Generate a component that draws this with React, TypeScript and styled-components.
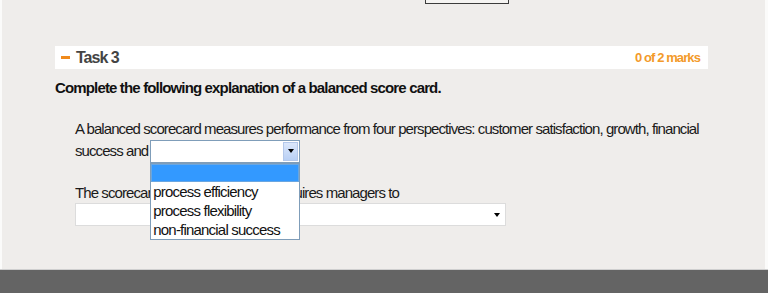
import React from 'react';
import styled, { createGlobalStyle } from 'styled-components';

const GlobalStyle = createGlobalStyle`
  html, body {
    margin: 0;
    padding: 0;
    background: #ffffff;
  }
`;

const Page = styled.div`
  width: 768px;
  height: 293px;
  display: flex;
  flex-direction: column;
  background: #fbfbfa;
  overflow: hidden;
  font-family: 'Liberation Sans', Arial, sans-serif;
`;

const Frame = styled.div`
  flex: 1;
  margin: 0 3px 0 2px;
  background: #efedeb;
  display: flex;
  flex-direction: column;
`;

const TopTab = styled.div`
  margin-left: 423px;
  width: 82px;
  height: 3px;
  border: 1px solid #3c3c3c;
  border-top: none;
  background: #f5f4f2;
`;

const Content = styled.div`
  padding: 42px 0 0 53px;
`;

const Header = styled.div`
  width: 653px;
  height: 23px;
  background: #ffffff;
  display: flex;
  align-items: center;
  justify-content: space-between;
  padding: 0 8px 0 6px;
  box-sizing: border-box;
`;

const HeaderTitle = styled.div`
  display: flex;
  align-items: center;
  gap: 6px;
  color: #444444;
  font-family: 'Liberation Sans Narrow', 'Liberation Sans', Arial, sans-serif;
  font-weight: bold;
  font-size: 16px;
  letter-spacing: -1px;
`;

const Dash = styled.span`
  width: 9px;
  height: 3px;
  background: #f08a1c;
`;

const Marks = styled.div`
  color: #f39a2a;
  font-family: 'Liberation Sans Narrow', 'Liberation Sans', Arial, sans-serif;
  font-weight: bold;
  font-size: 13px;
  letter-spacing: -0.9px;
`;

const Instruction = styled.p`
  margin: 10px 0 0 0;
  font-size: 15px;
  font-weight: bold;
  color: #111111;
  letter-spacing: -0.85px;
  line-height: 18px;
`;

const Question = styled.div`
  padding: 22px 0 0 20px;
  color: #1a1a1a;
  font-size: 15px;
  letter-spacing: -0.92px;
  line-height: 20px;
`;

const Line = styled.div`
  display: flex;
  align-items: center;
  gap: 2px;
  height: 20px;
`;

const Spacer = styled.div<{ $h: number }>`
  height: ${(p) => p.$h}px;
`;

const SelectBox = styled.div<{ $w: number; $plain?: boolean }>`
  position: relative;
  width: ${(p) => p.$w}px;
  height: 23px;
  box-sizing: border-box;
  background: #ffffff;
  border: 1px solid ${(p) => (p.$plain ? '#dcdcdc' : '#7f9db9')};
  display: flex;
  justify-content: flex-end;
  align-items: stretch;
`;

const ArrowButton = styled.div<{ $plain?: boolean }>`
  width: 15px;
  display: flex;
  align-items: center;
  justify-content: center;
  box-sizing: border-box;
  margin: 1px;
  ${(p) =>
    p.$plain
      ? 'background: transparent;'
      : `background: linear-gradient(#dbe7fb, #b9d0f5);
         border: 1px solid #b4c8ea;`}
`;

const Triangle = styled.span`
  width: 0;
  height: 0;
  border-left: 3px solid transparent;
  border-right: 3px solid transparent;
  border-top: 4px solid #000000;
`;

const OptionList = styled.div`
  position: absolute;
  left: -1px;
  top: 22px;
  width: 150px;
  box-sizing: border-box;
  background: #ffffff;
  border: 1px solid #7f9db9;
  z-index: 2;
  font-size: 15px;
  letter-spacing: -0.8px;
  color: #111111;
`;

const Option = styled.div<{ $active?: boolean }>`
  height: ${(p) => (p.$active ? 16 : 19)}px;
  line-height: 19px;
  padding-left: 2px;
  background: ${(p) => (p.$active ? '#3399ff' : 'transparent')};
  border: ${(p) => (p.$active ? '1px solid #6aa6e0' : 'none')};
`;

const Footer = styled.div`
  height: 23px;
  background: #646464;
  border-top: 1px solid #cfcfcf;
`;

export default function App() {
  return (
    <>
      <GlobalStyle />
      <Page>
        <Frame>
          <TopTab />
          <Content>
            <Header>
              <HeaderTitle>
                <Dash />
                Task 3
              </HeaderTitle>
              <Marks>0 of 2 marks</Marks>
            </Header>
            <Instruction>Complete the following explanation of a balanced score card.</Instruction>
            <Question>
              <Line>
                A balanced scorecard measures performance from four perspectives: customer satisfaction, growth, financial
              </Line>
              <Spacer $h={2} />
              <Line>
                success and
                <SelectBox $w={150}>
                  <ArrowButton>
                    <Triangle />
                  </ArrowButton>
                  <OptionList>
                    <Option $active />
                    <Option>process efficiency</Option>
                    <Option>process flexibility</Option>
                    <Option>non-financial success</Option>
                  </OptionList>
                </SelectBox>
              </Line>
              <Spacer $h={22} />
              <Line>The scorecard approach therefore requires managers to</Line>
              <SelectBox $w={431} $plain>
                <ArrowButton $plain>
                  <Triangle />
                </ArrowButton>
              </SelectBox>
            </Question>
          </Content>
        </Frame>
        <Footer />
      </Page>
    </>
  );
}
